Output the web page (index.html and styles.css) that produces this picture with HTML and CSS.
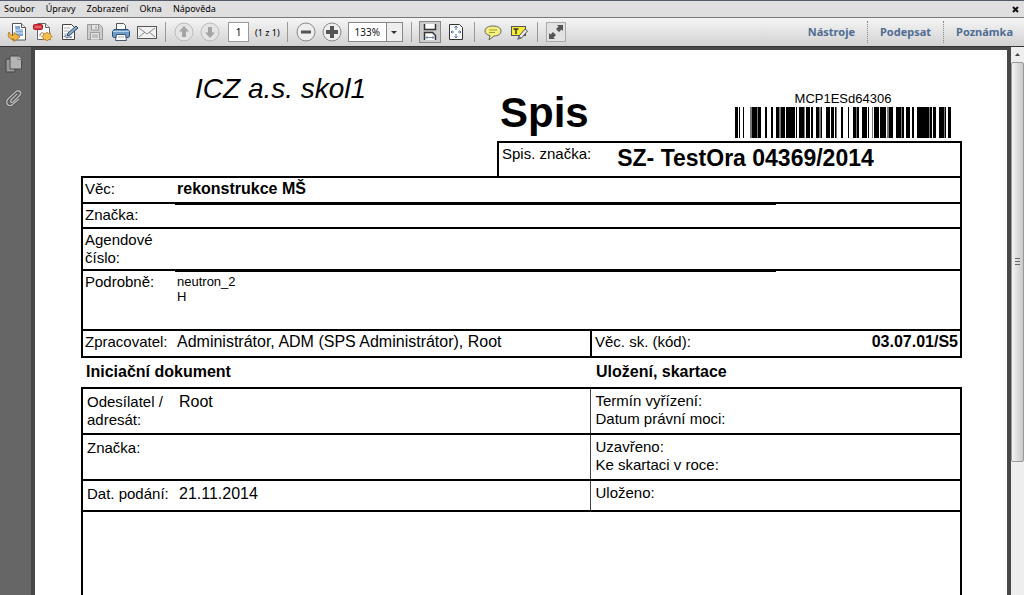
FILE: index.html
```html
<!DOCTYPE html>
<html lang="cs">
<head>
<meta charset="utf-8">
<title>Spis</title>
<link rel="stylesheet" href="styles.css">
</head>
<body>
<header class="menubar">
  <nav class="menus">
    <button type="button">Soubor</button>
    <button type="button">Úpravy</button>
    <button type="button">Zobrazení</button>
    <button type="button">Okna</button>
    <button type="button">Nápověda</button>
  </nav>
  <button type="button" class="close" aria-label="Zavřít"><svg width="7" height="7" viewBox="0 0 7 7"><path d="M1 1l5 5M6 1L1 6" stroke="#111" stroke-width="2"/></svg></button>
</header>

<div class="toolbar">
  <div class="tools">
    <button type="button" class="tool" aria-label="Otevřít"><svg width="20" height="20" viewBox="0 0 20 20"><path d="M5.500 1.500h9l4 4v12.500h-13z" fill="#fff" stroke="#555"/><path d="M14.500 1.500v4h4" fill="#eee" stroke="#555"/><path d="M8 4h5v3h3v7H9z" fill="#7fa8d8"/><path d="M8 8h8M8 11h8" stroke="#d7e6f7"/><path d="M2 10c-2 4 0 8 5 7v2.500l6-4.500-6-4.500v2.500c-2 1-4 0-5-3z" fill="#f3b73d" stroke="#a9701b" stroke-width=".8"/></svg></button>
    <button type="button" class="tool" aria-label="Vytvořit PDF"><svg width="20" height="20" viewBox="0 0 20 20"><path d="M4.500 1.500h8l4 4v12h-12z" fill="#fff" stroke="#666"/><path d="M12.500 1.500v4h4" fill="#eee" stroke="#666"/><rect x=".5" y="2.500" width="9" height="5" rx="1" fill="#d8323c" stroke="#b32029"/><path d="M2 5h6" stroke="#ee969b"/><path d="M7 14c0-3 2-4 3-3" fill="none" stroke="#cf5a60"/><path d="M14 10l1.300 1.700 2.200-.6-.1 2.200 1.900 1.200-1.900 1.300.1 2.200-2.200-.5L14 19l-1.300-1.500-2.200.5.100-2.200-1.900-1.300 1.900-1.200-.1-2.200 2.200.6z" fill="#f4c04d" stroke="#b77a1d" stroke-width=".8"/></svg></button>
    <button type="button" class="tool" aria-label="Upravit"><svg width="20" height="20" viewBox="0 0 20 20"><path d="M3.500 2.500h9l3 3v12h-12z" fill="#fff" stroke="#444"/><path d="M5 6h6M5 9h5M5 12h3" stroke="#aaa"/><path d="M5 15c1-2 2-2 2 0s2 0 3 0h3" fill="none" stroke="#334f78"/><path d="M8 14l1-3 8-7 2 2-8 7z" fill="#87a9d0" stroke="#324762"/></svg></button>
    <button type="button" class="tool" aria-label="Uložit"><svg width="20" height="20" viewBox="0 0 20 20"><path d="M2.500 2.500h12l3 3v12h-15z" fill="#ccc" stroke="#999"/><path d="M6.500 3v5h7V3M5.500 17.500v-7h9v7" fill="#e5e5e5" stroke="#999"/><path d="M11 4v3M7 13h6M7 15h6" stroke="#999"/></svg></button>
    <button type="button" class="tool" aria-label="Tisk"><svg width="20" height="20" viewBox="0 0 20 20"><path d="M5.500 8V1.500h7l2 2V8" fill="#fff" stroke="#555"/><path d="M3 7.500h14l1.500 2v5l-1.500 1H3l-1.500-1v-5z" fill="#6d9cc8" stroke="#2f4f70"/><path d="M2 9.500h16" stroke="#b5d2ee"/><path d="M5.500 12.500h9l1 6h-11z" fill="#fff" stroke="#445a70"/><path d="M7 15h6" stroke="#aaa"/></svg></button>
    <button type="button" class="tool" aria-label="E-mail"><svg width="20" height="20" viewBox="0 0 20 20"><rect x=".5" y="4.500" width="19" height="12" fill="#f2f2f2" stroke="#555"/><path d="M2 6l8 6 8-6M2 15l6-5M18 15l-6-5" fill="none" stroke="#888"/></svg></button>
    <span class="sep"></span>
    <button type="button" class="tool" aria-label="Předchozí stránka"><svg width="20" height="20" viewBox="0 0 20 20"><circle cx="10" cy="10" r="9" fill="#e4e4e4" stroke="#bbb"/><path d="M10 4l5 5.500h-3V15H8V9.500H5z" fill="#a4a4a4"/></svg></button>
    <button type="button" class="tool" aria-label="Další stránka"><svg width="20" height="20" viewBox="0 0 20 20"><circle cx="10" cy="10" r="9" fill="#e4e4e4" stroke="#bbb"/><path d="M10 16l5-5.500h-3V5H8v5.500H5z" fill="#a4a4a4"/></svg></button>
    <input class="pagenum" type="text" value="1" aria-label="Stránka">
    <span class="pages">(1 z 1)</span>
    <span class="sep"></span>
    <button type="button" class="tool" aria-label="Zmenšit"><svg width="20" height="20" viewBox="0 0 20 20"><circle cx="10" cy="10" r="9" fill="#eee" stroke="#888"/><path d="M5 10h10" stroke="#555" stroke-width="3"/></svg></button>
    <button type="button" class="tool" aria-label="Zvětšit"><svg width="20" height="20" viewBox="0 0 20 20"><circle cx="10" cy="10" r="9" fill="#eee" stroke="#888"/><path d="M4 10h12M10 4v12" stroke="#555" stroke-width="4"/></svg></button>
    <span class="zoom"><select aria-label="Lupa"><option>133%</option></select><svg width="6" height="3" viewBox="0 0 6 3"><path d="M0 0h6L3 3z" fill="#333"/></svg></span>
    <span class="sep"></span>
    <button type="button" class="tool pressed" aria-label="Na šířku"><svg width="20" height="20" viewBox="0 0 20 20"><path d="M4.500 2v5.500h11V2" fill="#fff" stroke="#333" stroke-width="1.500"/><path d="M4.500 18v-7.500h8l3 3V18" fill="#fff" stroke="#333" stroke-width="1.500"/><path d="M6 15.500h8M7.500 14L6 15.500 7.500 17M12.500 14l1.500 1.500-1.500 1.500" fill="none" stroke="#7288a8"/></svg></button>
    <button type="button" class="tool" aria-label="Celá stránka"><svg width="20" height="20" viewBox="0 0 20 20"><path d="M3.500 2.500h10l3 3v12h-13z" fill="#fff" stroke="#333"/><path d="M10 4v4M10 12v4M5 10h3M12 10h3M8.500 5.500L10 4l1.500 1.500M8.500 14.500L10 16l1.500-1.500M6.500 8.500L5 10l1.500 1.500M13.500 8.500L15 10l-1.500 1.500" fill="none" stroke="#4b6ea5"/></svg></button>
    <span class="sep"></span>
    <button type="button" class="tool" aria-label="Poznámka"><svg width="20" height="20" viewBox="0 0 20 20"><path d="M10 4c5 0 8 2 8 5s-3 5-7 5l-5 4 1-4.500c-3-.5-5-2-5-4.500 0-3 3-5 8-5z" fill="#f3ef80" stroke="#666"/><path d="M6 8h8M6 10.500h6" stroke="#a29a32"/></svg></button>
    <button type="button" class="tool" aria-label="Zvýraznit text"><svg width="20" height="20" viewBox="0 0 20 20"><rect x="2.500" y="4.500" width="14" height="9" fill="#f8ed31" stroke="#555"/><path d="M4.500 7h5M7 7v5" stroke="#333" stroke-width="1.500"/><path d="M9 17l1-3 6-7 2.500 2-6 7z" fill="#e8e8e8" stroke="#555"/><path d="M8 18l2-4 3 2z" fill="#777"/></svg></button>
    <span class="sep"></span>
    <button type="button" class="tool framed" aria-label="Režim čtení"><svg width="20" height="20" viewBox="0 0 20 20"><path d="M17 3v6l-1.500-1.500L13 10l-3-3 2.500-2.500L11 3zM3 17v-6l1.500 1.500L7 10l3 3-2.500 2.500L9 17z" fill="#555"/></svg></button>
  </div>
  <nav class="panels">
    <button type="button">Nástroje</button>
    <button type="button">Podepsat</button>
    <button type="button">Poznámka</button>
  </nav>
</div>

<div class="viewer">
  <aside class="side">
    <button type="button" aria-label="Miniatury stránek"><svg width="18" height="18" viewBox="0 0 18 18"><path d="M1 4h9v13H1z" fill="#999" stroke="#444"/><path d="M5 1h8l3.500 3.500V14H5z" fill="#b4b4b4" stroke="#4c4c4c"/><path d="M13 1v3.500h3.500" fill="#ddd" stroke="#777"/></svg></button>
    <button type="button" aria-label="Přílohy"><svg width="18" height="18" viewBox="0 0 18 18"><path d="M12 5l-6 6c-1 2 .5 3 2 2l7-7c2-3-1-5.500-4-3.500L3 10c-3 4 0 8 4 6l7-6" fill="none" stroke="#4a4a4a" stroke-width="2.500"/><path d="M12 5l-6 6c-1 2 .5 3 2 2l7-7c2-3-1-5.500-4-3.500L3 10c-3 4 0 8 4 6l7-6" fill="none" stroke="#bbb" stroke-width="1.400"/></svg></button>
  </aside>

  <main class="sheet">
    <div class="head">
      <p class="org">ICZ a.s. skol1</p>
      <div class="head-right">
        <div class="title-row">
          <h1>Spis</h1>
          <figure class="barcode">
            <figcaption>MCP1ESd64306</figcaption>
            <svg width="216" height="31" viewBox="0 0 216 31" preserveAspectRatio="none" shape-rendering="crispEdges"><path fill="#777" d="M15 0h2v31h-2zM22 0h1v31h-1zM44 0h2v31h-2zM69 0h1v31h-1zM84 0h2v31h-2zM101 0h1v31h-1zM121 0h1v31h-1zM137 0h1v31h-1zM152 0h2v31h-2zM166 0h1v31h-1zM194 0h1v31h-1zM209 0h1v31h-1z"/><path d="M0 0h3v31H0zM4 0h1v31h-1zM8 0h1v31h-1zM17 0h5v31h-5zM23 0h3v31h-3zM30 0h2v31h-2zM36 0h2v31h-2zM41 0h3v31h-3zM46 0h4v31h-4zM51 0h9v31h-9zM61 0h1v31h-1zM64 0h5v31h-5zM71 0h4v31h-4zM76 0h2v31h-2zM81 0h3v31h-3zM86 0h1v31h-1zM91 0h4v31h-4zM96 0h3v31h-3zM100 0h1v31h-1zM106 0h2v31h-2zM113 0h1v31h-1zM118 0h3v31h-3zM122 0h2v31h-2zM127 0h5v31h-5zM133 0h1v31h-1zM139 0h5v31h-5zM145 0h6v31h-6zM154 0h4v31h-4zM161 0h5v31h-5zM167 0h2v31h-2zM171 0h4v31h-4zM177 0h2v31h-2zM182 0h12v31h-12zM195 0h2v31h-2zM198 0h3v31h-3zM204 0h5v31h-5zM210 0h1v31h-1zM213 0h3v31h-3z"/></svg>
          </figure>
        </div>
        <div class="ref"><span class="ref-label">Spis. značka:</span><strong>SZ- TestOra 04369/2014</strong></div>
      </div>
    </div>

    <table class="form main">
      <colgroup><col class="c-label"><col><col class="c-half"><col class="c-half"></colgroup>
      <tr class="r-subject"><th>Věc:</th><td colspan="2" class="heavy strong">rekonstrukce MŠ</td><td></td></tr>
      <tr class="r-mark"><th>Značka:</th><td colspan="2"></td><td></td></tr>
      <tr class="r-agenda"><th>Agendové číslo:</th><td colspan="2" class="heavy"></td><td></td></tr>
      <tr class="r-detail"><th>Podrobně:</th><td colspan="2" class="small">neutron_2<br>H</td><td></td></tr>
      <tr class="r-owner"><th>Zpracovatel:</th><td class="owner">Administrátor, ADM (SPS Administrátor), Root</td><td class="split lab">Věc. sk. (kód):</td><td class="code">03.07.01/S5</td></tr>
    </table>

    <div class="headings"><h2>Iniciační dokument</h2><h2>Uložení, skartace</h2></div>

    <table class="form second">
      <colgroup><col class="c-label"><col><col class="c-right"></colgroup>
      <tr class="r-two"><th>Odesílatel / adresát:</th><td>Root</td><td class="split lab">Termín vyřízení:<br>Datum právní moci:</td></tr>
      <tr class="r-two"><th>Značka:</th><td></td><td class="split lab">Uzavřeno:<br>Ke skartaci v roce:</td></tr>
      <tr class="r-one"><th>Dat. podání:</th><td>21.11.2014</td><td class="split lab">Uloženo:</td></tr>
      <tr class="r-rest"><td colspan="3"></td></tr>
    </table>
  </main>

  <div class="scroll">
    <button type="button" aria-label="Nahoru"><svg width="5" height="3" viewBox="0 0 5 3"><path d="M0 3h5L2.500 0z" fill="#444"/></svg></button>
    <div class="track"><div class="thumb"><svg width="7" height="7" viewBox="0 0 7 7"><path d="M1 .5h5M1 3.500h5M1 6.500h5" stroke="#666"/></svg></div></div>
  </div>
</div>
</body>
</html>
```
FILE: styles.css
```css
* { box-sizing: border-box; }
body {
  margin: 0;
  height: 100vh;
  display: flex;
  flex-direction: column;
  overflow: hidden;
  font-family: "Liberation Sans", Arial, sans-serif;
  color: #000;
  background: #666;
}
button {
  border: 0;
  padding: 0;
  background: none;
  font: inherit;
  color: inherit;
}
svg { display: block; }

/* Menu bar */
.menubar {
  display: flex;
  justify-content: space-between;
  align-items: center;
  flex: none;
  height: 18px;
  padding: 0 5px 0 4px;
  border-top: 1px solid #555b6b;
  border-bottom: 1px solid #777;
  background: #dfdfdf;
  font: 9px/16px "Noto Sans", sans-serif;
}
.menus { display: flex; gap: 11px; }

/* Toolbar */
.toolbar {
  display: flex;
  justify-content: space-between;
  align-items: center;
  flex: none;
  height: 28px;
  padding: 0 11px 0 4px;
  background: linear-gradient(#f5f5f5, #d2d2d2);
}
.tools, .panels { display: flex; align-items: center; }
.tool { width: 26px; height: 22px; display: grid; place-items: center; }
.pressed svg { background: #ccc; outline: 1px solid #888; }
.framed svg { background: #e2e2e2; outline: 1px solid #aaa; outline-offset: -1px; }
.sep { width: 1px; height: 20px; margin: 0 5px; background: #999; }
.pagenum {
  width: 21px;
  height: 20px;
  margin: 0 6px 0 5px;
  padding: 0;
  border: 1px solid #999;
  text-align: center;
  font: 10px "Noto Sans", sans-serif;
}
.pages { margin-right: 2px; font: 9px "Noto Sans", sans-serif; white-space: nowrap; }
.zoom { position: relative; margin: 0 3px; }
.zoom select {
  display: block;
  appearance: none;
  width: 55px;
  height: 20px;
  padding: 0 0 0 6px;
  border: 1px solid #888;
  border-radius: 0;
  background: linear-gradient(#888, #888) 37px 0 / 1px 100% no-repeat, linear-gradient(90deg, #fff 37px, #eee 37px);
  font: 10px "Noto Sans", sans-serif;
  color: #111;
}
.zoom svg { position: absolute; right: 6px; top: 9px; pointer-events: none; }
.panels { font: bold 11px/22px "Noto Sans", sans-serif; color: #4f6d93; }
.panels button + button { margin-left: 12px; padding-left: 12px; border-left: 1px dotted #888; }

/* Viewer */
.viewer {
  flex: 1;
  min-height: 0;
  display: flex;
  background: #484848;
  border-top: 1px solid #333;
}
.side {
  flex: none;
  width: 31px;
  padding: 8px 5px;
  display: flex;
  flex-direction: column;
  gap: 16px;
  background: #666;
}
.sheet {
  flex: 1;
  min-width: 0;
  margin: 3px 4px 0;
  padding: 24px 45px 0 46px;
  overflow: hidden;
  background: #fff;
}
.scroll {
  flex: none;
  width: 13px;
  display: flex;
  flex-direction: column;
  background: #eee;
}
.scroll button { height: 15px; display: grid; place-items: center; }
.track { flex: 1; }
.thumb {
  height: 75%;
  display: grid;
  place-items: center;
  border: 1px solid #999;
  border-radius: 2px;
  background: linear-gradient(90deg, #f3f3f3, #c8c8c8);
}

/* Sheet header */
.head { display: flex; justify-content: space-between; }
.org { margin: 0; padding-left: 114px; font: italic 28px/30px "Liberation Sans", Arial, sans-serif; }
.head-right { width: 465px; }
.title-row { display: flex; justify-content: space-between; height: 67px; padding: 0 11px 0 3px; }
h1 { margin: 0; padding-top: 15px; font-size: 42px; line-height: 48px; }
.barcode { margin: 0; padding-top: 16px; }
figcaption { font-size: 13px; line-height: 17px; text-align: center; }
.ref {
  display: flex;
  gap: 26px;
  height: 35px;
  padding-left: 3px;
  border: 2px solid #000;
  border-bottom: 0;
}
.ref-label { font-size: 15px; line-height: 22px; }
.ref strong { font-size: 23px; line-height: 31px; }

/* Form tables */
.form {
  width: 100%;
  table-layout: fixed;
  border-collapse: collapse;
  border: 2px solid #000;
}
.c-label { width: 93px; }
.c-half { width: 185px; }
.c-right { width: 371px; }
.form th, .form td {
  padding: 2px 2px 0;
  vertical-align: top;
  text-align: left;
  font-weight: normal;
  font-size: 16px;
  line-height: 18px;
  border-bottom: 2px solid #000;
}
.form th, .form .lab { font-size: 15px; }
.form .heavy { border-bottom-width: 3px; }
.form .strong { font-weight: bold; }
.form .small { font-size: 13px; line-height: 15px; }
.form .split { border-left: 2px solid #000; padding-left: 3px; }
.form .code { font-weight: bold; text-align: right; }
.form .owner { white-space: nowrap; }
.r-subject { height: 26px; }
.r-mark { height: 25px; }
.r-agenda { height: 42px; }
.r-detail { height: 60px; }
.r-owner { height: 27px; }
.headings { display: flex; height: 29px; padding-left: 5px; }
.headings h2 { margin: 0; flex: 1; font-size: 16px; line-height: 28px; }
.headings h2 + h2 { flex: none; width: 366px; }
.form.second th, .form.second td { padding: 4px 4px 0; }
.form.second .split { border-left: 1px solid #444; padding: 3px 5px 0; }
.r-two { height: 46px; }
.r-one { height: 31px; }
.r-rest { height: 400px; }
```
